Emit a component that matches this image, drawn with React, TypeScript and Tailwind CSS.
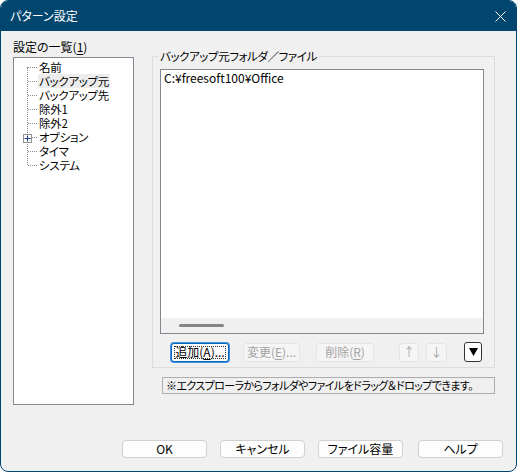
import { ReactNode } from 'react'

const font = "font-['Noto_Sans_CJK_JP','Noto_Sans',sans-serif] [font-feature-settings:'palt']"

const treeItems = ['名前', 'バックアップ元', 'バックアップ先', '除外1', '除外2', 'オプション', 'タイマ', 'システム']

function U({ children }: { children: ReactNode }) {
  return <span className="underline underline-offset-2">{children}</span>
}

function DisabledButton({ children, className }: { children: ReactNode; className: string }) {
  return (
    <div
      className={`h-[19px] rounded-[3px] border border-[#e5e5e5] bg-[#f5f5f5] text-[#a3a3a3] flex items-center justify-center leading-none ${className}`}
    >
      {children}
    </div>
  )
}

function DialogButton({ label, className }: { label: string; className: string }) {
  return (
    <div
      className={`w-[85px] h-[18px] rounded-[4px] border border-[#d0d0d0] bg-[#fdfdfd] text-black flex items-center justify-center leading-none ${className}`}
    >
      {label}
    </div>
  )
}

function Tree() {
  return (
    <div className="relative h-[348px] border border-[#828790] bg-white pt-[2px] text-[11.5px]">
      {/* vertical connector */}
      <div className="absolute left-[13px] top-[9px] h-[98px] border-l border-dotted border-[#8c8c8c]" />
      {/* expand box for オプション */}
      <div className="absolute left-[9px] top-[76px] w-[9px] h-[9px] border border-[#919191] bg-white flex items-center justify-center">
        <svg width="7" height="7" viewBox="0 0 7 7">
          <path d="M0.5 3.5h6M3.5 0.5v6" stroke="#1d3c8f" strokeWidth="1" />
        </svg>
      </div>
      {treeItems.map((item, i) => (
        <div key={item} className="h-[14px] flex items-center">
          <span className="ml-[14px] w-[9px] border-t border-dotted border-[#8c8c8c]" />
          <span
            className={`ml-[1px] px-[1px] h-[14px] leading-[14px] tracking-[-0.3px] ${i === 1 ? 'bg-[#ececec]' : ''}`}
          >
            {item}
          </span>
        </div>
      ))}
    </div>
  )
}

export default function App() {
  return (
    <div className={`w-[517px] h-[472px] bg-white text-[12px] text-black ${font}`}>
      <div className="w-[517px] h-[472px] rounded-[8px] border border-[#00466e] bg-[#f0f0f0] flex flex-col overflow-hidden">
        {/* title bar */}
        <div className="h-[30px] bg-[#00466e] flex items-center justify-between pl-[9px] pr-[10px] text-white">
          <span className="leading-none">パターン設定</span>
          <svg width="11" height="11" viewBox="0 0 11 11">
            <path d="M0.5 0.5l10 10M10.5 0.5l-10 10" stroke="white" strokeWidth="1" />
          </svg>
        </div>

        {/* body */}
        <div className="flex-1 flex flex-col">
          <div className="flex items-start pl-[12px]">
            <div className="w-[121px] pt-[6px]">
              <div className="h-[20px] leading-[20px]">
                設定の一覧(<U>1</U>)
              </div>
              <Tree />
            </div>

            <div className="ml-[18px] mt-[25px] w-[343px]">
              {/* group box */}
              <div className="relative h-[312px] border border-[#dcdcdc] pl-[7px] pt-[12px]">
                <span className="absolute left-[5px] top-[-8px] bg-[#f0f0f0] px-[2px] leading-[14px] text-[11.5px] tracking-[-0.4px]">
                  バックアップ元フォルダ／ファイル
                </span>
                <div className="w-[324px] h-[265px] border border-[#828790] bg-white flex flex-col">
                  <div className="flex-1 pl-[3px] pt-[1px] leading-[14px]">C:¥freesoft100¥Office</div>
                  <div className="h-[15px] bg-[#f0f0f0] flex items-center pl-[18px]">
                    <div className="w-[45px] h-[3px] rounded-full bg-[#858585]" />
                  </div>
                </div>

                {/* list buttons */}
                <div className="mt-[8px] flex items-center">
                  <div className="ml-[11px] w-[58px] h-[19px] rounded-[3px] border border-[#0067c0] bg-[#fdfdfd] p-[2px] shadow-[0_0_0_1px_#4a90d9]">
                    <div className="h-full border border-dotted border-[#333333] flex items-center justify-center leading-none">
                      追加(<U>A</U>)...
                    </div>
                  </div>
                  <DisabledButton className="ml-[14px] w-[57px]">
                    変更(<U>E</U>)...
                  </DisabledButton>
                  <DisabledButton className="ml-[16px] w-[58px]">
                    削除(<U>R</U>)
                  </DisabledButton>
                  <DisabledButton className="ml-[25px] w-[20px]">↑</DisabledButton>
                  <DisabledButton className="ml-[7px] w-[21px]">↓</DisabledButton>
                  <div className="ml-[17px] w-[18px] h-[20px] rounded-[3px] border border-[#333333] bg-white flex items-center justify-center">
                    <svg width="9" height="8" viewBox="0 0 9 8">
                      <path d="M0 0h9L4.5 8z" fill="black" />
                    </svg>
                  </div>
                </div>
              </div>

              {/* hint */}
              <div className="ml-[10px] mt-[9px] w-[333px] h-[17px] border border-[#adadad] bg-[#f0f0f0] pl-[3px] text-[11px] tracking-[-0.6px] leading-[15px] whitespace-nowrap overflow-hidden">
                ※エクスプローラからフォルダやファイルをドラッグ＆ドロップできます。
              </div>
            </div>
          </div>

          {/* dialog buttons */}
          <div className="mt-[35px] flex justify-end pr-[13px]">
            <DialogButton label="OK" className="" />
            <DialogButton label="キャンセル" className="ml-[13px]" />
            <DialogButton label="ファイル容量" className="ml-[13px]" />
            <DialogButton label="ヘルプ" className="ml-[15px]" />
          </div>
        </div>
      </div>
    </div>
  )
}
